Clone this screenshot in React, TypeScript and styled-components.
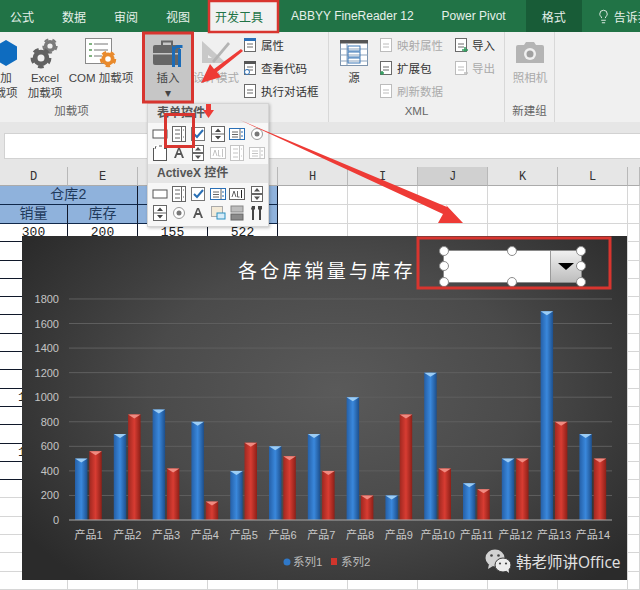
import React from "react";
import styled, { createGlobalStyle } from "styled-components";
import { Lightbulb } from "lucide-react";

const CJK = `"Liberation Sans", "Noto Sans CJK SC", sans-serif`;
const MONO = `"Liberation Mono", "Noto Sans CJK SC", monospace`;

const GlobalStyle = createGlobalStyle`
  html, body { margin: 0; padding: 0; background: #fff; }
  body { font-family: ${CJK}; }
`;

const Page = styled.div`
  position: relative;
  width: 640px;
  height: 590px;
  overflow: hidden;
  background: #fff;
`;

/* ---------- tabs ---------- */
const TabBar = styled.div`
  display: flex;
  align-items: stretch;
  height: 32px;
  margin-left: -4px;
  background: #217346;
  white-space: nowrap;
`;

const Tab = styled.div<{ $active?: boolean; $dark?: boolean }>`
  display: flex;
  align-items: center;
  padding: ${(p) => (p.$active ? "0 14px 0 7px" : p.$dark ? "0 16px" : "0 14px")};
  margin-left: ${(p) => (p.$active ? "4px" : p.$dark ? "6px" : "0")};
  font-size: 12px;
  color: ${(p) => (p.$active ? "#217346" : "#e6f0ea")};
  background: ${(p) => (p.$active ? "#f1f1f1" : p.$dark ? "#185c37" : "transparent")};
`;

const TellMe = styled.div`
  display: flex;
  align-items: center;
  gap: 3px;
  margin-left: 14px;
  font-size: 12px;
  color: #e6f0ea;
`;

/* ---------- ribbon ---------- */
const Ribbon = styled.div`
  display: flex;
  height: 90px;
  background: #f0f0f0;
  overflow: hidden;
`;

const Group = styled.div<{ $width: number; $line?: boolean }>`
  flex: none;
  display: flex;
  flex-direction: column;
  width: ${(p) => p.$width}px;
  border-right: ${(p) => (p.$line ? "1px solid #d8d8d8" : "none")};
  box-sizing: border-box;
`;

const GroupBody = styled.div`
  flex: 1;
  display: flex;
  align-items: flex-start;
`;

const GroupLabel = styled.div`
  height: 22px;
  line-height: 18px;
  text-align: center;
  font-size: 11.5px;
  color: #666;
`;

const LargeButton = styled.div<{ $width: number; $off?: number; $muted?: boolean; $pressed?: boolean }>`
  flex: none;
  display: flex;
  flex-direction: column;
  align-items: center;
  box-sizing: border-box;
  width: ${(p) => p.$width}px;
  height: 70px;
  margin-left: ${(p) => p.$off ?? 0}px;
  padding-top: 4px;
  font-size: 11.5px;
  line-height: 15px;
  text-align: center;
  white-space: nowrap;
  color: ${(p) => (p.$muted ? "#aaa" : "#444")};
  background: ${(p) => (p.$pressed ? "#c6c6c6" : "transparent")};
`;

const LargeIcon = styled.div`
  height: 34px;
  margin-bottom: 1px;
  display: flex;
  align-items: center;
  justify-content: center;
`;

const SmallColumn = styled.div<{ $off: number }>`
  display: flex;
  flex-direction: column;
  gap: 5px;
  margin-left: ${(p) => p.$off}px;
  padding-top: 4px;
`;

const SmallButton = styled.div<{ $muted?: boolean }>`
  display: flex;
  align-items: center;
  gap: 3px;
  height: 18px;
  font-size: 11.5px;
  white-space: nowrap;
  color: ${(p) => (p.$muted ? "#aaa" : "#333")};
`;

/* ---------- formula bar ---------- */
const FormulaRow = styled.div`
  padding: 11px 0 8px 4px;
  background: #e6e6e6;
`;

const FormulaInput = styled.div`
  height: 24px;
  background: #fff;
  border: 1px solid #d2d2d2;
  border-right: none;
`;

/* ---------- sheet ---------- */
const Sheet = styled.div`
  display: grid;
  grid-template-columns: 68px repeat(8, 70px) 12px;
  grid-template-rows: 19px 19px 19px;
  grid-auto-rows: 18.3px;
`;

const ColHead = styled.div<{ $selected?: boolean }>`
  line-height: 20px;
  text-align: center;
  font-family: ${MONO};
  font-size: 12px;
  color: #333;
  background: ${(p) => (p.$selected ? "#d0d0d0" : "#e6e6e6")};
  border-right: 1px solid #b8b8b8;
  border-bottom: 1px solid #ababab;
  box-sizing: border-box;
`;

const Cell = styled.div<{ $ink?: boolean; $fill?: boolean; $span?: number }>`
  grid-column: span ${(p) => p.$span ?? 1};
  box-sizing: border-box;
  overflow: hidden;
  text-align: center;
  font-family: ${MONO};
  font-size: ${(p) => (p.$fill ? "14px" : "13px")};
  line-height: 18px;
  color: ${(p) => (p.$fill ? "#1f3a5c" : "#222")};
  background: ${(p) => (p.$fill ? "#8fb2dc" : "#fff")};
  border-right: 1px solid ${(p) => (p.$ink ? "#10182a" : "#d6d6d6")};
  border-bottom: 1px solid ${(p) => (p.$fill ? "#10284a" : p.$ink ? "#10182a" : "#d6d6d6")};
`;

/* ---------- insert dropdown ---------- */
const Menu = styled.div`
  position: absolute;
  left: 147px;
  top: 103px;
  width: 120px;
  height: 122px;
  background: #f7f7f7;
  border: 1px solid #d4d4d4;
  box-shadow: 1px 1px 3px rgba(0, 0, 0, 0.25);
`;

const MenuTitle = styled.div`
  height: 19px;
  line-height: 19px;
  padding-left: 9px;
  font-size: 12px;
  font-weight: 700;
  color: #555;
  background: #e6e6e6;
`;

const MenuGrid = styled.div`
  display: grid;
  grid-template-columns: repeat(6, 19.4px);
  grid-auto-rows: 19.5px;
  padding: 1px 0 1px 2px;
  place-items: center;
`;

/* ---------- chart object ---------- */
const ChartObject = styled.div`
  position: absolute;
  left: 22px;
  top: 236px;
  width: 605px;
  height: 344px;
  background: radial-gradient(ellipse 62% 75% at 52% 45%, #5a5a5a 0%, #4a4a4a 50%, #2b2b2b 100%);
`;

const ChartSvg = styled.svg`
  display: block;
`;

const ComboControl = styled.div`
  position: absolute;
  left: 421px;
  top: 14px;
  width: 139px;
  height: 33px;
  display: flex;
  border: 1px solid #8a8a8a;
  box-sizing: border-box;
  background: #fff;
`;

const ComboField = styled.div`
  flex: 1;
`;

const ComboArrow = styled.div`
  flex: none;
  display: flex;
  align-items: center;
  justify-content: center;
  width: 30px;
  background: linear-gradient(#f0f0f0, #bdbdbd);
  border-left: 1px solid #9a9a9a;
  &::after {
    content: "";
    border-left: 8px solid transparent;
    border-right: 8px solid transparent;
    border-top: 7px solid #000;
  }
`;

const Handle = styled.span<{ $x: number; $y: number }>`
  position: absolute;
  left: ${(p) => p.$x}%;
  top: ${(p) => p.$y}%;
  width: 8px;
  height: 8px;
  margin: -5.5px 0 0 -5.5px;
  border-radius: 50%;
  border: 1.5px solid #8c8c8c;
  background: #fff;
`;

const Annotations = styled.svg`
  position: absolute;
  left: 0;
  top: 0;
  pointer-events: none;
`;

/* ---------- drawn icons ---------- */
const Gear: React.FC<{ cx: number; cy: number; r: number; color: string }> = ({ cx, cy, r, color }) => (
  <g>
    <circle cx={cx} cy={cy} r={r * 0.62} fill="none" stroke={color} strokeWidth={r * 0.5} />
    <circle cx={cx} cy={cy} r={r * 0.95} fill="none" stroke={color} strokeWidth={r * 0.3} strokeDasharray={`${r * 0.6} ${r * 0.6}`} />
  </g>
);

const Hexagon = () => (
  <svg width="24" height="28" viewBox="0 0 24 28">
    <path d="M12 1 23 7.500v13L12 27 1 20.500v-13z" fill="#0e6cc0" />
  </svg>
);

const GearsIcon = () => (
  <svg width="30" height="32" viewBox="0 0 30 32">
    <Gear cx={20} cy={9} r={7} color="#7a7a7a" />
    <Gear cx={11} cy={21} r={9.5} color="#626262" />
  </svg>
);

const ComIcon = () => (
  <svg width="34" height="32" viewBox="0 0 34 32">
    <rect x="1.500" y="1.500" width="26" height="25" fill="#fff" stroke="#8a8a8a" />
    <path d="M5 7h3M5 13h3M5 19h3" stroke="#5a9a5a" strokeWidth="1.500" />
    <path d="M10 7h14M10 13h14M10 19h8" stroke="#777" />
    <Gear cx={24} cy={22} r={7.5} color="#e98a2c" />
  </svg>
);

const BriefcaseIcon = () => (
  <svg width="32" height="32" viewBox="0 0 32 32">
    <path d="M10 8V4.500h10V8" fill="none" stroke="#666" strokeWidth="2" />
    <rect x="1" y="8" width="27" height="20" rx="2" fill="#666" />
    <rect x="1" y="16" width="27" height="1.500" fill="#c6c6c6" />
    <path d="M20 13v17h3V13l2-2V8l-3.500 2L20 8z" fill="#1c6cb8" />
    <path d="M26 12v18h3V12z" fill="#1c6cb8" />
    <path d="M24.500 8h6v3h-6z" fill="#1c6cb8" />
  </svg>
);

const DesignIcon = () => (
  <svg width="32" height="32" viewBox="0 0 32 32">
    <path d="M2 4v22h24z M8 18v3h4z" fill="#c8c8c8" fillRule="evenodd" />
    <path d="M12 24 28 5l2 2-16 19z" fill="#b4b4b4" />
  </svg>
);

const SheetIcon: React.FC<{ muted?: boolean; kind: "props" | "code" | "dialog" | "map" | "pack" | "refresh" | "in" | "out" }> = ({ muted, kind }) => {
  const c = muted ? "#bcbcbc" : "#6a6a6a";
  return (
    <svg width="15" height="16" viewBox="0 0 15 16">
      <rect x="1.500" y="1.500" width="11" height="13" fill="#fff" stroke={c} />
      {kind === "props" && <rect x="1" y="1" width="12" height="3" fill="#2a70b8" />}
      {kind === "code" && <rect x="1" y="1" width="12" height="3" fill="#555" />}
      <path d="M4 7h6M4 10h6" stroke={c} />
      {kind === "code" && <circle cx="4" cy="12" r="2.500" fill="#fff" stroke="#2a70b8" />}
      {kind === "pack" && <path d="M1 13h4M3 11v4" stroke="#2f9a5c" strokeWidth="1.500" />}
      {kind === "in" && <path d="M8 13h6M11 10v5" stroke="#2f9a5c" strokeWidth="1.500" />}
      {kind === "out" && <path d="M10 13h4" stroke={c} strokeWidth="1.500" />}
    </svg>
  );
};

const SourceIcon = () => (
  <svg width="28" height="26" viewBox="0 0 28 26">
    <rect x="0.500" y="0.500" width="27" height="25" fill="#fff" stroke="#7d94ad" />
    <rect x="0" y="0" width="28" height="3.500" fill="#555" />
    <path d="M0 9h28M0 15h28M0 21h28M7 3v22" stroke="#8ba3bd" />
    <rect x="8" y="6" width="12" height="5" fill="none" stroke="#3a77b5" />
    <rect x="8" y="12" width="12" height="5" fill="none" stroke="#3a77b5" />
    <rect x="8" y="18" width="12" height="5" fill="none" stroke="#3a77b5" />
  </svg>
);

const CameraIcon = () => (
  <svg width="28" height="24" viewBox="0 0 28 24">
    <path d="M2 4h6l2-3h8l2 3h6a2 2 0 0 1 2 2v16H0V6a2 2 0 0 1 2-2z" fill="#b4b4b4" />
    <circle cx="14" cy="13" r="6" fill="#f0f0f0" />
    <circle cx="14" cy="13" r="3.500" fill="#a0a0a0" />
  </svg>
);

type FormKind = "button" | "list" | "check" | "spin" | "listbox" | "radio" | "group" | "label" | "scroll" | "text" | "image" | "toggle" | "more";

const FormIcon: React.FC<{ kind: FormKind; muted?: boolean }> = ({ kind, muted }) => {
  const c = muted ? "#c4c4c4" : "#666";
  const blue = muted ? "#c4c4c4" : "#2a6fb5";
  return (
    <svg width="16" height="16" viewBox="0 0 16 16">
      {kind === "button" && <rect x="1" y="4" width="14" height="8" fill="#fff" stroke="#555" />}
      {kind === "list" && (
        <g fill="none" stroke={c}>
          <rect x="1.500" y="0.500" width="13" height="15" fill="#fff" />
          <path d="M4 4h5M4 8h5M4 12h5M10.500 1v14" />
          <path d="M12 4h1M12 11h1" />
        </g>
      )}
      {kind === "check" && (
        <g fill="none">
          <rect x="1.500" y="1.500" width="13" height="13" fill="#fff" stroke="#777" />
          <path d="M4 8l3 3 6-7" stroke={blue} strokeWidth="2" />
        </g>
      )}
      {kind === "spin" && (
        <g>
          <rect x="1.500" y="0.500" width="13" height="15" fill="#fff" stroke={c} />
          <path d="M1 8h14" stroke={c} />
          <path d="M8 2.500 11 6H5zM8 13.500 5 10h6z" fill="#444" />
        </g>
      )}
      {kind === "listbox" && (
        <g fill="none" stroke={blue}>
          <rect x="0.500" y="2.500" width="15" height="11" fill="#fff" />
          <path d="M3 6h6M3 8.500h6M3 11h6M11 3v10" stroke={c} />
          <path d="M12 6h2M12 10h2" />
        </g>
      )}
      {kind === "radio" && (
        <g>
          <circle cx="8" cy="8" r="5.500" fill="#fff" stroke="#999" />
          <circle cx="8" cy="8" r="2.500" fill="#777" />
        </g>
      )}
      {kind === "group" && (
        <g>
          <rect x="1.500" y="3.500" width="13" height="12" fill="#fff" stroke="#555" />
          <rect x="2" y="0" width="10" height="5" fill="#fff" />
          <path d="M3 4l1-3M7 1h3" stroke="#555" />
        </g>
      )}
      {kind === "label" && <path d="M3 13 7 3h2l4 10h-2l-1-3H6l-1 3zM6.700 8h2.600L8 4.500z" fill="#555" />}
      {kind === "scroll" && (
        <g>
          <rect x="2.500" y="0.500" width="11" height="7" fill="#fff" stroke={c} />
          <rect x="2.500" y="8.500" width="11" height="7" fill="#fff" stroke={c} />
          <path d="M8 2l3 3.500H5zM8 14 5 10.500h6z" fill="#555" />
        </g>
      )}
      {kind === "text" && (
        <g>
          <rect x="0.500" y="2.500" width="15" height="11" fill="#fff" stroke={c} />
          <path d="M12.500 4v8" stroke={muted ? c : "#222"} />
          <path d="M3 11l2-6 2 6M8.500 5v6h2" fill="none" stroke={c} />
        </g>
      )}
      {kind === "image" && (
        <g>
          <rect x="1.500" y="1.500" width="11" height="10" fill="#f3ead8" stroke="#aaa" />
          <rect x="7" y="8" width="8" height="6" fill="#d6ecf8" stroke="#2a8fc0" />
        </g>
      )}
      {kind === "toggle" && (
        <g>
          <rect x="2" y="1" width="12" height="6" fill="#bdbdbd" stroke="#888" />
          <rect x="2" y="9" width="12" height="6" fill="#8a8a8a" stroke="#666" />
        </g>
      )}
      {kind === "more" && <path d="M3 1h3v3l-1 1v10H3V5L2 4zM9 1h4v3l-1 1v10h-2V5L9 4z" fill="#444" />}
    </svg>
  );
};

const WeChatMark = () => (
  <g>
    <ellipse cx="495" cy="558" rx="9.500" ry="8.500" fill="#d2d2d2" />
    <path d="M489 564l-1 5 5-3z" fill="#d2d2d2" />
    <circle cx="491.500" cy="555.500" r="1.300" fill="#444" />
    <circle cx="498.500" cy="555.500" r="1.300" fill="#444" />
    <ellipse cx="503" cy="565" rx="8" ry="7" fill="#ececec" stroke="#3c3c3c" />
    <path d="M506 570.500l3 2.500-.5-4z" fill="#ececec" />
    <circle cx="500" cy="563.500" r="1.100" fill="#444" />
    <circle cx="506" cy="563.500" r="1.100" fill="#444" />
  </g>
);

/* ---------- data ---------- */
const blueSeries = [500, 700, 900, 800, 400, 600, 700, 1000, 200, 1200, 300, 500, 1700, 700];
const redSeries = [560, 860, 420, 150, 630, 520, 400, 200, 860, 420, 250, 500, 800, 500];
const ticks = [0, 200, 400, 600, 800, 1000, 1200, 1400, 1600, 1800];
const columns = ["D", "E", "F", "G", "H", "I", "J", "K", "L", ""];
const handles = [
  [0, 0], [50, 0], [100, 0],
  [0, 50], [100, 50],
  [0, 100], [50, 100], [100, 100],
];
const AXIS_Y = 520;
const PX_PER_UNIT = 0.1228;
const CATEGORY = 38.8;
const BAR = 12.5;

// the sheet rows that peek out from behind the chart
const bodyRows: Record<number, string[]> = {
  0: ["300", "200", "155", "522"],
  9: ["1000", "", "", ""],
  12: ["1200", "", "", ""],
};

const Bar: React.FC<{ x: number; value: number; fill: string; cap: string }> = ({ x, value, fill, cap }) => {
  const top = AXIS_Y - value * PX_PER_UNIT;
  return (
    <g>
      <rect x={x} y={top} width={BAR} height={value * PX_PER_UNIT} fill={`url(#${fill})`} />
      <path d={`M${x} ${top}h${BAR}l-${BAR / 2} 4z`} fill={cap} />
    </g>
  );
};

const Chart = () => (
  <ChartObject>
    <ChartSvg width="605" height="344" viewBox="22 236 605 344">
      <defs>
        <linearGradient id="blueBar" x1="0" x2="1" y1="0" y2="0">
          <stop offset="0" stopColor="#2560a8" />
          <stop offset="0.5" stopColor="#3a88dc" />
          <stop offset="1" stopColor="#1d4f8c" />
        </linearGradient>
        <linearGradient id="redBar" x1="0" x2="1" y1="0" y2="0">
          <stop offset="0" stopColor="#a02820" />
          <stop offset="0.5" stopColor="#d83c32" />
          <stop offset="1" stopColor="#8c2018" />
        </linearGradient>
      </defs>
      <text x="238" y="278" fontSize="19" letterSpacing="3.2" fill="#fff" fontFamily={CJK}>
        各仓库销量与库存
      </text>
      {ticks.map((t) => {
        const y = AXIS_Y - t * PX_PER_UNIT;
        return (
          <g key={t}>
            {t > 0 && <line x1="69" x2="612" y1={y} y2={y} stroke="#5f5f5f" />}
            <text x="59" y={y + 4} textAnchor="end" fontSize="11" fill="#c4c4c4" fontFamily={CJK}>
              {t}
            </text>
          </g>
        );
      })}
      {blueSeries.map((v, i) => {
        const left = 75 + i * CATEGORY;
        return (
          <g key={i}>
            <Bar x={left} value={v} fill="blueBar" cap="#9ccdf5" />
            <Bar x={left + BAR + 1.8} value={redSeries[i]} fill="redBar" cap="#f08a80" />
            <text x={left + 13.5} y="539" textAnchor="middle" fontSize="11" fill="#c8c8c8" fontFamily={CJK}>
              产品{i + 1}
            </text>
          </g>
        );
      })}
      <line x1="69" x2="612" y1={AXIS_Y} y2={AXIS_Y} stroke="#a8a8a8" strokeWidth="1.200" />
      <circle cx="287" cy="562" r="3.500" fill="#2f78c8" />
      <text x="293" y="566" fontSize="11.500" fill="#bdbdbd" fontFamily={CJK}>系列1</text>
      <rect x="331" y="558" width="6" height="7" fill="#d0352c" />
      <text x="341" y="566" fontSize="11.500" fill="#bdbdbd" fontFamily={CJK}>系列2</text>
      <WeChatMark />
      <text x="516" y="568" fontSize="15.500" fill="#e2e2e2" fontFamily={`"Open Sans", "Noto Sans CJK SC", sans-serif`}>
        韩老师讲Office
      </text>
    </ChartSvg>
    <ComboControl>
      <ComboField />
      <ComboArrow />
      {handles.map(([x, y]) => (
        <Handle key={`${x}-${y}`} $x={x} $y={y} />
      ))}
    </ComboControl>
  </ChartObject>
);

const App: React.FC = () => (
  <Page>
    <GlobalStyle />
    <TabBar>
      <Tab>公式</Tab>
      <Tab>数据</Tab>
      <Tab>审阅</Tab>
      <Tab>视图</Tab>
      <Tab $active>开发工具</Tab>
      <Tab>ABBYY FineReader 12</Tab>
      <Tab>Power Pivot</Tab>
      <Tab $dark>格式</Tab>
      <TellMe>
        <Lightbulb size={15} strokeWidth={1.5} />
        告诉我
      </TellMe>
    </TabBar>

    <Ribbon>
      <Group $width={143}>
        <GroupBody>
          <LargeButton $width={26} $off={-7}>
            <LargeIcon><Hexagon /></LargeIcon>
            <span>加</span>
            <span>载项</span>
          </LargeButton>
          <LargeButton $width={36} $off={8}>
            <LargeIcon><GearsIcon /></LargeIcon>
            <span>Excel</span>
            <span>加载项</span>
          </LargeButton>
          <LargeButton $width={70} $off={3}>
            <LargeIcon><ComIcon /></LargeIcon>
            <span>COM 加载项</span>
          </LargeButton>
        </GroupBody>
        <GroupLabel>加载项</GroupLabel>
      </Group>

      <Group $width={186} $line>
        <GroupBody>
          <LargeButton $width={50} $pressed>
            <LargeIcon><BriefcaseIcon /></LargeIcon>
            <span>插入</span>
            <span>▾</span>
          </LargeButton>
          <LargeButton $width={46} $muted>
            <LargeIcon><DesignIcon /></LargeIcon>
            <span>设计模式</span>
          </LargeButton>
          <SmallColumn $off={4}>
            <SmallButton><SheetIcon kind="props" />属性</SmallButton>
            <SmallButton><SheetIcon kind="code" />查看代码</SmallButton>
            <SmallButton><SheetIcon kind="dialog" />执行对话框</SmallButton>
          </SmallColumn>
        </GroupBody>
        <GroupLabel />
      </Group>

      <Group $width={176} $line>
        <GroupBody>
          <LargeButton $width={46} $off={2}>
            <LargeIcon><SourceIcon /></LargeIcon>
            <span>源</span>
          </LargeButton>
          <SmallColumn $off={2}>
            <SmallButton $muted><SheetIcon muted kind="map" />映射属性</SmallButton>
            <SmallButton><SheetIcon kind="pack" />扩展包</SmallButton>
            <SmallButton $muted><SheetIcon muted kind="refresh" />刷新数据</SmallButton>
          </SmallColumn>
          <SmallColumn $off={11}>
            <SmallButton><SheetIcon kind="in" />导入</SmallButton>
            <SmallButton $muted><SheetIcon muted kind="out" />导出</SmallButton>
          </SmallColumn>
        </GroupBody>
        <GroupLabel>XML</GroupLabel>
      </Group>

      <Group $width={50} $line>
        <GroupBody>
          <LargeButton $width={50} $muted>
            <LargeIcon><CameraIcon /></LargeIcon>
            <span>照相机</span>
          </LargeButton>
        </GroupBody>
        <GroupLabel>新建组</GroupLabel>
      </Group>
    </Ribbon>

    <FormulaRow>
      <FormulaInput />
    </FormulaRow>

    <Sheet>
      {columns.map((c, i) => (
        <ColHead key={i} $selected={c === "J"}>{c}</ColHead>
      ))}

      <Cell $ink $fill $span={2}>仓库2</Cell>
      <Cell $ink $fill $span={2} />
      {columns.slice(4).map((c, i) => <Cell key={i} />)}

      <Cell $ink $fill>销量</Cell>
      <Cell $ink $fill>库存</Cell>
      <Cell $ink $fill />
      <Cell $ink $fill />
      {columns.slice(4).map((c, i) => <Cell key={i} />)}

      {Array.from({ length: 20 }).map((_, row) => (
        <React.Fragment key={row}>
          {[0, 1, 2, 3].map((col) => (
            <Cell key={col} $ink={row < 14}>{bodyRows[row]?.[col] ?? ""}</Cell>
          ))}
          {columns.slice(4).map((c, i) => <Cell key={i} />)}
        </React.Fragment>
      ))}
    </Sheet>

    <Chart />

    <Menu>
      <MenuTitle>表单控件</MenuTitle>
      <MenuGrid>
        <FormIcon kind="button" />
        <FormIcon kind="list" />
        <FormIcon kind="check" />
        <FormIcon kind="spin" />
        <FormIcon kind="listbox" />
        <FormIcon kind="radio" />
        <FormIcon kind="group" />
        <FormIcon kind="label" />
        <FormIcon kind="scroll" />
        <FormIcon kind="text" muted />
        <FormIcon kind="list" muted />
        <FormIcon kind="listbox" muted />
      </MenuGrid>
      <MenuTitle>ActiveX 控件</MenuTitle>
      <MenuGrid>
        <FormIcon kind="button" />
        <FormIcon kind="list" />
        <FormIcon kind="check" />
        <FormIcon kind="listbox" />
        <FormIcon kind="text" />
        <FormIcon kind="scroll" />
        <FormIcon kind="spin" />
        <FormIcon kind="radio" />
        <FormIcon kind="label" />
        <FormIcon kind="image" />
        <FormIcon kind="toggle" />
        <FormIcon kind="more" />
      </MenuGrid>
    </Menu>

    <Annotations width="640" height="590" viewBox="0 0 640 590">
      <g fill="none" stroke="#d8352f">
        <rect x="209" y="1" width="69" height="31" strokeWidth="2.500" />
        <rect x="143.500" y="33" width="49" height="69" strokeWidth="3" />
        <rect x="165.500" y="114.500" width="28" height="32" strokeWidth="3" />
        <rect x="418" y="238" width="192" height="50" strokeWidth="3" />
      </g>
      <g fill="#ee3b36">
        <path d="M243 51 217 72 221 77 201 83 210 64 214 69 241 49z" />
        <path d="M206 104h5v6h3l-5.500 8-5.500-8h3z" />
        <path d="M240 120 447 207 446 205 463 223 438 223 443 214z" />
      </g>
    </Annotations>
  </Page>
);

export default App;
